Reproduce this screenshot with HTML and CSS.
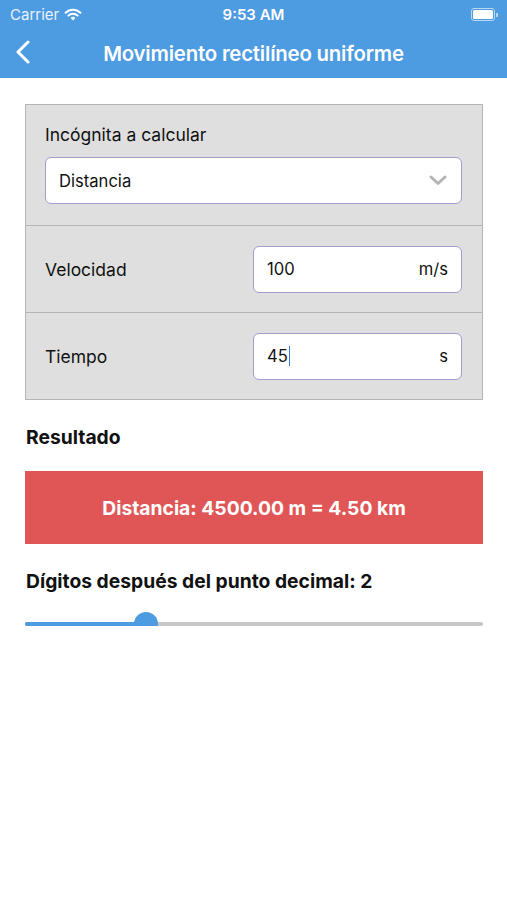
FILE: index.html
```html
<!DOCTYPE html>
<html lang="es">
<head>
    <meta charset="UTF-8">
    <meta name="viewport" content="width=device-width, initial-scale=1.0">
    <title>Movimiento rectilíneo uniforme</title>
    <link rel="stylesheet" href="styles.css">
</head>
<body>
    <header class="topbar">
        <div class="status">
            <span class="carrier">Carrier
                <svg class="wifi" width="18" height="13" viewBox="0 0 18 13">
                    <path d="M9 12.5 L6.6 9.9 A3.4 3.4 0 0 1 11.4 9.9 Z" fill="#fff"/>
                    <path d="M4.4 7.6 A6.5 6.5 0 0 1 13.6 7.6" stroke="#fff" stroke-width="2" fill="none" stroke-linecap="round"/>
                    <path d="M1.6 4.8 A10.4 10.4 0 0 1 16.4 4.8" stroke="#fff" stroke-width="2" fill="none" stroke-linecap="round"/>
                </svg>
            </span>
            <span class="clock">9:53 AM</span>
            <span class="battery"><span class="battery-fill"></span></span>
        </div>
        <nav class="navbar">
            <svg class="back" width="14" height="24" viewBox="0 0 14 24">
                <path d="M12 2 L2 12 L12 22" stroke="#fff" stroke-width="3" fill="none" stroke-linecap="round" stroke-linejoin="round"/>
            </svg>
            <h1>Movimiento rectilíneo uniforme</h1>
        </nav>
    </header>

    <main class="content">
        <section class="form">
            <div class="row row-select">
                <label>Incógnita a calcular</label>
                <div class="select">
                    <span>Distancia</span>
                    <svg width="18" height="11" viewBox="0 0 18 11">
                        <path d="M2 2 L9 8.5 L16 2" stroke="#b4b4b4" stroke-width="3" fill="none" stroke-linecap="round" stroke-linejoin="round"/>
                    </svg>
                </div>
            </div>
            <div class="row">
                <label>Velocidad</label>
                <div class="field"><span>100</span><span>m/s</span></div>
            </div>
            <div class="row">
                <label>Tiempo</label>
                <div class="field"><span>45<i class="caret"></i></span><span>s</span></div>
            </div>
        </section>

        <h2>Resultado</h2>
        <div class="result">Distancia: 4500.00 m = 4.50 km</div>

        <h2 class="digits">Dígitos después del punto decimal: 2</h2>
        <div class="slider">
            <div class="slider-fill" style="width: 26.4%"></div>
            <div class="slider-thumb"></div>
        </div>
    </main>
</body>
</html>
```

FILE: styles.css
```css
body {
    margin: 0;
    font-family: Inter, "Liberation Sans", sans-serif;
    color: #111;
    background: #fff;
}
.topbar {
    background: #4d9be0;
    color: #fff;
    height: 78px;
}
.status {
    height: 28px;
    display: flex;
    align-items: center;
    justify-content: space-between;
    padding: 0 11px 0 10px;
    font-size: 15px;
    position: relative;
}
.carrier {
    display: flex;
    align-items: center;
    gap: 5px;
    color: #eaf3fc;
}
.clock {
    position: absolute;
    left: 0;
    right: 0;
    text-align: center;
    font-weight: 600;
}
.battery {
    width: 20px;
    height: 9px;
    border: 1.5px solid rgba(255,255,255,0.6);
    border-radius: 3px;
    padding: 1px;
    box-sizing: content-box;
    position: relative;
    margin-right: 1px;
}
.battery-fill {
    display: block;
    height: 100%;
    background: #fff;
    border-radius: 1.5px;
}
.battery::after {
    content: "";
    position: absolute;
    right: -4px;
    top: 4px;
    width: 2px;
    height: 4px;
    background: rgba(255,255,255,0.6);
    border-radius: 0 1px 1px 0;
}
.navbar {
    height: 50px;
    display: flex;
    align-items: center;
    justify-content: center;
    position: relative;
}
.back {
    position: absolute;
    left: 16px;
    top: 12px;
}
.navbar h1 {
    margin: 0;
    font-size: 20.4px;
    font-weight: 600;
    letter-spacing: -0.2px;
}
.content {
    padding: 26px 24px 0 25px;
}
.form {
    background: #dfdfdf;
    border: 1px solid #b5b5b5;
}
.row {
    display: flex;
    align-items: center;
    justify-content: space-between;
    height: 86px;
    padding: 0 20px 0 19px;
    border-top: 1px solid #b5b5b5;
    font-size: 17.5px;
}
.row-select {
    border-top: none;
    height: 120px;
    flex-direction: column;
    align-items: stretch;
    justify-content: flex-start;
    padding-top: 19px;
    box-sizing: border-box;
}
.row-select label {
    margin-bottom: 12px;
}
.select, .field {
    background: #fff;
    border: 1.5px solid #a49ccf;
    border-radius: 6px;
    height: 45px;
    display: flex;
    align-items: center;
    justify-content: space-between;
    padding: 0 12px 0 13px;
    font-size: 16.6px;
}
.select svg {
    margin-right: 2px;
}
.field {
    width: 181px;
    padding-right: 13px;
}
.caret {
    display: inline-block;
    width: 1px;
    height: 20px;
    background: #3a7bdc;
    vertical-align: -4px;
    margin-left: 1px;
}
h2 {
    font-size: 19.3px;
    font-weight: 700;
    margin: 25px 0 22px 1px;
}
.result {
    background: #e05656;
    color: #fff;
    font-size: 19.3px;
    font-weight: 700;
    height: 73px;
    display: flex;
    align-items: center;
    justify-content: center;
}
.digits {
    margin: 25px 0 0 1px;
}
.slider {
    position: relative;
    height: 4px;
    background: #c8c8c8;
    border-radius: 2px;
    margin-top: 29px;
}
.slider-fill {
    height: 100%;
    background: #4d9be0;
    border-radius: 2px;
}
.slider-thumb {
    position: absolute;
    left: calc(26.4% - 12px);
    top: -10px;
    width: 24px;
    height: 24px;
    border-radius: 50%;
    background: #4d9be0;
}
```
